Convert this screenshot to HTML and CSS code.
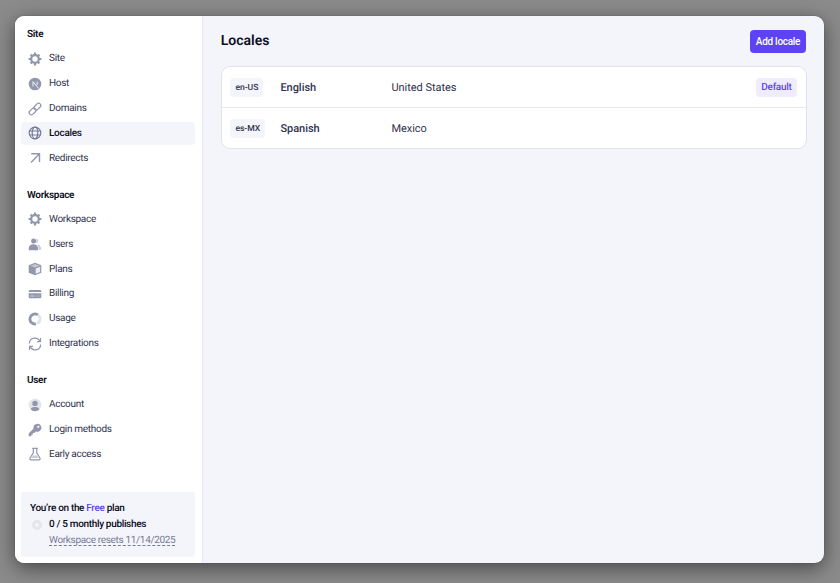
FILE: index.html
```html
<!DOCTYPE html>
<html lang="en">
<head>
<meta charset="utf-8">
<title>Locales</title>
<link rel="stylesheet" href="styles.css">
</head>
<body>
<svg class="sprite" aria-hidden="true">
  <symbol id="gear" viewBox="0 0 14 14">
    <g stroke="currentColor" stroke-width="2.2"><path d="M7 .6v2.400M7 11v2.400M.6 7H3M11 7h2.400M2.600 2.600l1.500 1.500M9.900 9.900l1.500 1.500M2.600 11.400l1.500-1.500M9.900 4.100l1.500-1.500"/></g>
    <circle cx="7" cy="7" r="3.800" fill="none" stroke="currentColor" stroke-width="2.200"/>
  </symbol>
</svg>
<div class="modal">
  <nav class="sidebar">
    <section class="group">
      <h2>Site</h2>
      <a class="item"><svg class="icon" viewBox="0 0 14 14"><use href="#gear"/></svg>Site</a>
      <a class="item"><svg class="icon" viewBox="0 0 14 14"><circle cx="7" cy="7" r="6.300" fill="currentColor"/><path d="M5 9.400V4.700L10.700 11.500M9.200 4.600V8" fill="none" stroke="#fff" stroke-width=".9"/></svg>Host</a>
      <a class="item"><svg class="icon line" viewBox="0 0 14 14"><rect x="-3.900" y="-2.200" width="7.800" height="4.400" rx="2.200" transform="translate(9.400 4.600) rotate(-45)"/><rect x="-3.900" y="-2.200" width="7.800" height="4.400" rx="2.200" transform="translate(4.600 9.400) rotate(-45)"/></svg>Domains</a>
      <a class="item active"><svg class="icon line" viewBox="0 0 14 14"><circle cx="7" cy="7" r="5.800"/><ellipse cx="7" cy="7" rx="2.800" ry="5.800"/><path d="M1.400 5h11.200M1.400 9h11.200"/></svg>Locales</a>
      <a class="item"><svg class="icon line arrow" viewBox="0 0 14 14"><path d="M3.200 2.700h8.300V11M11.300 2.900L3 11.600"/></svg>Redirects</a>
    </section>
    <section class="group">
      <h2>Workspace</h2>
      <a class="item"><svg class="icon" viewBox="0 0 14 14"><use href="#gear"/></svg>Workspace</a>
      <a class="item"><svg class="icon" viewBox="0 0 14 14" fill="currentColor"><g opacity=".5"><path d="M8.300 1.600a2.300 2.300 0 0 1 0 4.500zM9.200 7.400c2.600.3 4 2.300 4 5.400h-2.500c0-2-.3-4-1.500-5.400z"/></g><circle cx="5.600" cy="3.900" r="2.500"/><path d="M.8 13.200V11c0-2.500 1.900-3.800 4.500-3.800S10 8.500 10 11v2.200z"/></svg>Users</a>
      <a class="item"><svg class="icon" viewBox="0 0 14 14" fill="currentColor"><path d="M7 .8l6.300 2.500v7.400L7 13.300.7 10.700V3.300z"/><path d="M2.300 3.700L7 1.900l4.700 1.800L7 5.500z" fill="#c4c6d2"/><path d="M7.700 6.500l4.400-1.700v5.100l-4.400 1.900z" fill="#eeeff3"/></svg>Plans</a>
      <a class="item"><svg class="icon" viewBox="0 0 14 14" fill="currentColor"><path d="M2 3h10q1.300 0 1.300 1.200V5H.7v-.8Q.7 3 2 3z"/><path d="M.7 6.200h12.600v3.900q0 1.200-1.300 1.200H2Q.7 11.300.7 10.100z"/><path d="M2.300 9h4.200M8.500 9h1M10.500 9h1" stroke="#fff" stroke-width=".6"/></svg>Billing</a>
      <a class="item"><svg class="icon ring" viewBox="0 0 14 14"><path d="M9.900 2.900A5 5 0 0 1 9.100 11.500" opacity=".28"/><path d="M9.800 2.900A5 5 0 1 0 7.900 11.900"/></svg>Usage</a>
      <a class="item"><svg class="icon line" viewBox="0 0 14 14"><path d="M1.300 6.500A5.600 5.600 0 0 1 12 4.400M12.700 7.500A5.600 5.600 0 0 1 2 9.600M12.500 1v3.700H9M1.500 13V9.300H5"/></svg>Integrations</a>
    </section>
    <section class="group">
      <h2>User</h2>
      <a class="item"><svg class="icon" viewBox="0 0 14 14" fill="currentColor"><circle cx="7" cy="7" r="6.300" fill="#e3e4e9"/><circle cx="7" cy="5.400" r="2.700"/><path d="M2.600 11.200C3.300 9.500 5 9 7 9s3.700.5 4.400 2.200A6.300 6.300 0 0 1 7 13.300a6.300 6.300 0 0 1-4.400-2.100z"/></svg>Account</a>
      <a class="item"><svg class="icon" viewBox="0 0 14 14"><path fill="currentColor" fill-rule="evenodd" d="M9.400.7a4 4 0 0 0-3.900 4.900L.7 10.500v2.800h2.600v-1.600h1.500v-1.600h1.400l1.700-1.700A4 4 0 1 0 9.400.7zM10.300 2.700a1.100 1.100 0 1 1 0 2.200 1.100 1.100 0 0 1 0-2.200z"/></svg>Login methods</a>
      <a class="item"><svg class="icon line" viewBox="0 0 14 14"><path d="M4.200 1.300h5.600M5.300 1.300v4.600L2.100 11q-.7 1.800 1 1.800h7.800q1.700 0 1-1.800L8.700 5.900V1.300"/><path d="M4.900 8.500h4.200l1.300 2.400H3.600z" fill="currentColor" stroke="none" opacity=".5"/></svg>Early access</a>
    </section>
    <div class="plan">
      <p>You’re on the <span class="free">Free</span> plan</p>
      <p class="usage"><span class="meter"></span>0 / 5 monthly publishes</p>
      <p class="reset"><span>Workspace resets 11/14/2025</span></p>
    </div>
  </nav>
  <main class="content">
    <header class="header"><h1>Locales</h1><button class="add">Add locale</button></header>
    <div class="table">
      <div class="row"><div><span class="code">en-US</span></div><strong>English</strong><span>United States</span><span class="default">Default</span></div>
      <div class="row"><div><span class="code">es-MX</span></div><strong>Spanish</strong><span>Mexico</span></div>
    </div>
  </main>
</div>
</body>
</html>
```
FILE: styles.css
```css
* { box-sizing: border-box; }
body {
  margin: 0;
  height: 583px;
  padding: 15.500px 15.800px 19.700px 14.500px;
  overflow: hidden;
  background: #8b8b8b;
  font-family: Roboto, "Liberation Sans", sans-serif;
  font-size: 10px;
  letter-spacing: -.3px;
  text-rendering: geometricPrecision;
  color: #30334f;
}
h1, h2, p { margin: 0; }
.sprite { display: none; }
.modal {
  display: flex;
  height: 100%;
  border-radius: 9px;
  overflow: hidden;
  background: #f4f5fa;
  box-shadow: 0 0 1px rgba(0,0,0,.5), 0 5px 20px rgba(0,0,0,.5);
}
.sidebar {
  display: flex;
  flex-direction: column;
  width: 188px;
  padding: 7.500px 6.500px 6px;
  background: #fff;
  border-right: 1px solid #e8e9f0;
}
.group { margin-bottom: 13.700px; }
.group h2 {
  height: 23px;
  padding-left: 6px;
  font-size: 10px;
  line-height: 23px;
  font-weight: 600;
  color: #0c0e23;
}
.item {
  display: flex;
  align-items: center;
  gap: 7px;
  height: 23px;
  margin-top: 1.920px;
  padding-left: 7px;
  border-radius: 4px;
}
.group h2 + .item { margin-top: 1.200px; }
.item.active { background: #f4f5fa; color: #0c0e23; font-weight: 500; }
.icon { width: 14px; height: 14px; flex: none; color: #9297ad; }
.active .icon { color: #747a96; }
.line { fill: none; stroke: currentColor; stroke-width: 1.200; }
.arrow { stroke-width: 1.400; }
.ring { fill: none; stroke: currentColor; stroke-width: 2.800; }
.plan {
  height: 65px;
  margin-top: auto;
  padding: 8.300px 9px 0;
  border-radius: 3px;
  background: #f4f5fa;
  line-height: 16px;
  color: #090b1d;
  font-weight: 500;
  letter-spacing: -.33px;
}
.free { color: #5d43f5; }
.usage { display: flex; align-items: center; }
.meter {
  width: 10px;
  height: 10px;
  margin: 0 7.500px 0 1.500px;
  border: 3px solid #e5e6eb;
  border-radius: 50%;
}
.reset { padding-left: 19px; font-weight: 400; color: #747a96; }
.reset span {
  text-decoration: underline dashed 1px;
  text-underline-offset: 2px;
  text-decoration-skip-ink: none;
}
.content { flex: 1; padding: 14px 17.700px 0 18.200px; }
.header { display: flex; justify-content: space-between; height: 36.500px; }
h1 { font-size: 14px; line-height: 22px; font-weight: 600; letter-spacing: 0; color: #0c0e23; }
.add {
  width: 56px;
  height: 23px;
  margin-right: .5px;
  padding: 0;
  border: 0;
  border-radius: 4px;
  background: #5d43f5;
  color: #fff;
  font: 500 10px Roboto, sans-serif;
  letter-spacing: -.28px;
}
.table {
  height: 83px;
  border: 1px solid #e2e3ea;
  border-radius: 9px;
  background: #fff;
}
.row {
  display: grid;
  grid-template-columns: 50px 111px 1fr auto;
  align-items: center;
  height: 40px;
  padding: 0 9px 0 8.700px;
  font-size: 11px;
  letter-spacing: -.03px;
}
.row + .row { height: 41px; border-top: 1px solid #e8e9f0; }
.row strong { font-weight: 500; }
.code, .default {
  display: inline-block;
  padding: 0 5px;
  border-radius: 4px;
  background: #f4f5fa;
  font-size: 8.600px;
  line-height: 19px;
  font-weight: 500;
}
.code { padding-top: 1px; line-height: 18px; }
.default { background: #efedfd; color: #5d43f5; font-size: 10px; letter-spacing: -.3px; }
```
